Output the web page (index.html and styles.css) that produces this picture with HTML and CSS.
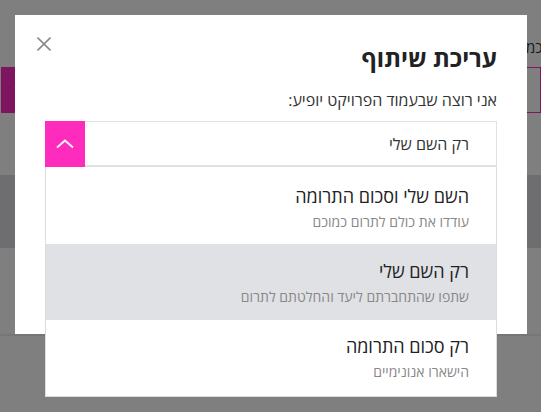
FILE: index.html
```html
<!DOCTYPE html>
<html lang="he" dir="rtl">
<head>
    <meta charset="UTF-8">
    <meta name="viewport" content="width=device-width, initial-scale=1.0">
    <title>עריכת שיתוף</title>
    <link rel="stylesheet" href="styles.css">
</head>
<body>
    <!-- העמוד שמאחורי החלון -->
    <div class="pagina">
        <div class="pagina-top"><span class="pagina-texto">הסכמה</span></div>
        <div class="pagina-campo">
            <span class="pagina-boton">
                <svg width="16" height="8" viewBox="0 0 16 8">
                    <path d="M1 1 L8 7 L15 1" stroke="#fff" stroke-width="1.6" fill="none"/>
                </svg>
            </span>
        </div>
        <div class="pagina-hueco"></div>
        <div class="pagina-banda"></div>
        <div class="pagina-resto"></div>
    </div>

    <div class="fondo-oscuro"></div>

    <!-- חלון עריכת שיתוף -->
    <div class="modal">
        <button class="cerrar" aria-label="סגירה">
            <svg width="14" height="14" viewBox="0 0 14 14">
                <path d="M0.5 0.5 L13.5 13.5 M13.5 0.5 L0.5 13.5" stroke="#8a8a8a" stroke-width="1.6" fill="none"/>
            </svg>
        </button>
        <h2 class="titulo">עריכת שיתוף</h2>
        <p class="etiqueta">אני רוצה שבעמוד הפרויקט יופיע:</p>

        <div class="selector">
            <div class="selector-caja">
                <span class="selector-valor">רק השם שלי</span>
                <span class="selector-flecha">
                    <svg width="18" height="10" viewBox="0 0 18 10">
                        <path d="M1 8.5 L9 1.5 L17 8.5" stroke="#fff" stroke-width="1.7" fill="none"/>
                    </svg>
                </span>
            </div>

            <ul class="opciones">
                <li class="opcion">
                    <span class="opcion-titulo">השם שלי וסכום התרומה</span>
                    <span class="opcion-sub">עודדו את כולם לתרום כמוכם</span>
                </li>
                <li class="opcion activa">
                    <span class="opcion-titulo">רק השם שלי</span>
                    <span class="opcion-sub">שתפו שהתחברתם ליעד והחלטתם לתרום</span>
                </li>
                <li class="opcion">
                    <span class="opcion-titulo">רק סכום התרומה</span>
                    <span class="opcion-sub">הישארו אנונימיים</span>
                </li>
            </ul>
        </div>
    </div>
</body>
</html>
```

FILE: styles.css
```css
body {
    margin: 0;
    height: 100vh;
    position: relative;
    overflow: hidden;
    background: #fff;
    font-family: "Open Sans", "Noto Sans", sans-serif;
    color: #222;
}

/* העמוד מאחור */
.pagina {
    display: flex;
    flex-direction: column;
}

.pagina-top {
    height: 67px;
    display: flex;
    align-items: flex-end;
    margin-right: -20px;
}

.pagina-texto {
    font-size: 15px;
    line-height: 20px;
    padding-bottom: 10px;
    color: #333;
}

.pagina-campo {
    height: 44px;
    margin-left: 1px;
    border: 1px solid #ff2bbd;
    display: flex;
    justify-content: flex-end;
}

.pagina-boton {
    width: 40px;
    background: #ff2bbd;
    display: flex;
    align-items: center;
    justify-content: center;
}

.pagina-hueco {
    height: 62px;
}

.pagina-banda {
    height: 73px;
    background: #dcdde2;
}

.pagina-resto {
    height: 86px;
    border-bottom: 2px solid #ececec;
}

.fondo-oscuro {
    position: absolute;
    inset: 0;
    background: rgba(0, 0, 0, 0.5);
}

/* החלון */
.modal {
    position: absolute;
    top: 15px;
    left: 15px;
    width: 512px;
    height: 319px;
    box-sizing: border-box;
    padding: 28px 30px 30px;
    background: #fff;
}

.cerrar {
    position: absolute;
    top: 22px;
    left: 22px;
    width: 14px;
    height: 14px;
    padding: 0;
    border: none;
    background: none;
    display: flex;
}

.titulo {
    margin: 0;
    font-size: 24px;
    line-height: 30px;
    font-weight: 700;
    color: #222;
}

.etiqueta {
    margin: 16px 0 0;
    font-size: 16px;
    line-height: 22px;
    color: #333;
}

.selector {
    position: relative;
    margin-top: 10px;
}

.selector-caja {
    height: 43px;
    display: flex;
    align-items: center;
    justify-content: space-between;
    border: 1px solid #e1e1e1;
    border-bottom-width: 2px;
    border-left: none;
}

.selector-valor {
    padding-right: 27px;
    font-size: 16px;
    color: #333;
}

.selector-flecha {
    width: 40px;
    height: 46px;
    margin-top: -1px;
    margin-bottom: -2px;
    background: #ff2bbd;
    display: flex;
    align-items: center;
    justify-content: center;
}

/* הרשימה הפתוחה */
.opciones {
    position: absolute;
    top: 46px;
    left: 0;
    right: 0;
    margin: 0;
    padding: 0;
    list-style: none;
    background: #fff;
    border: 1px solid #dcdcdc;
    border-top: none;
    z-index: 2;
}

.opcion {
    display: flex;
    flex-direction: column;
    height: 76px;
    box-sizing: border-box;
    padding: 15px 27px 0 0;
}

.opcion:first-child {
    height: 77px;
    padding-top: 17px;
}

.opcion:last-child {
    padding-top: 14px;
}

.opcion.activa {
    background: #e0e1e5;
}

.opcion-titulo {
    font-size: 18px;
    line-height: 24px;
    color: #222;
}

.opcion-sub {
    margin-top: 5px;
    font-size: 14px;
    line-height: 18px;
    color: #888;
}
```
